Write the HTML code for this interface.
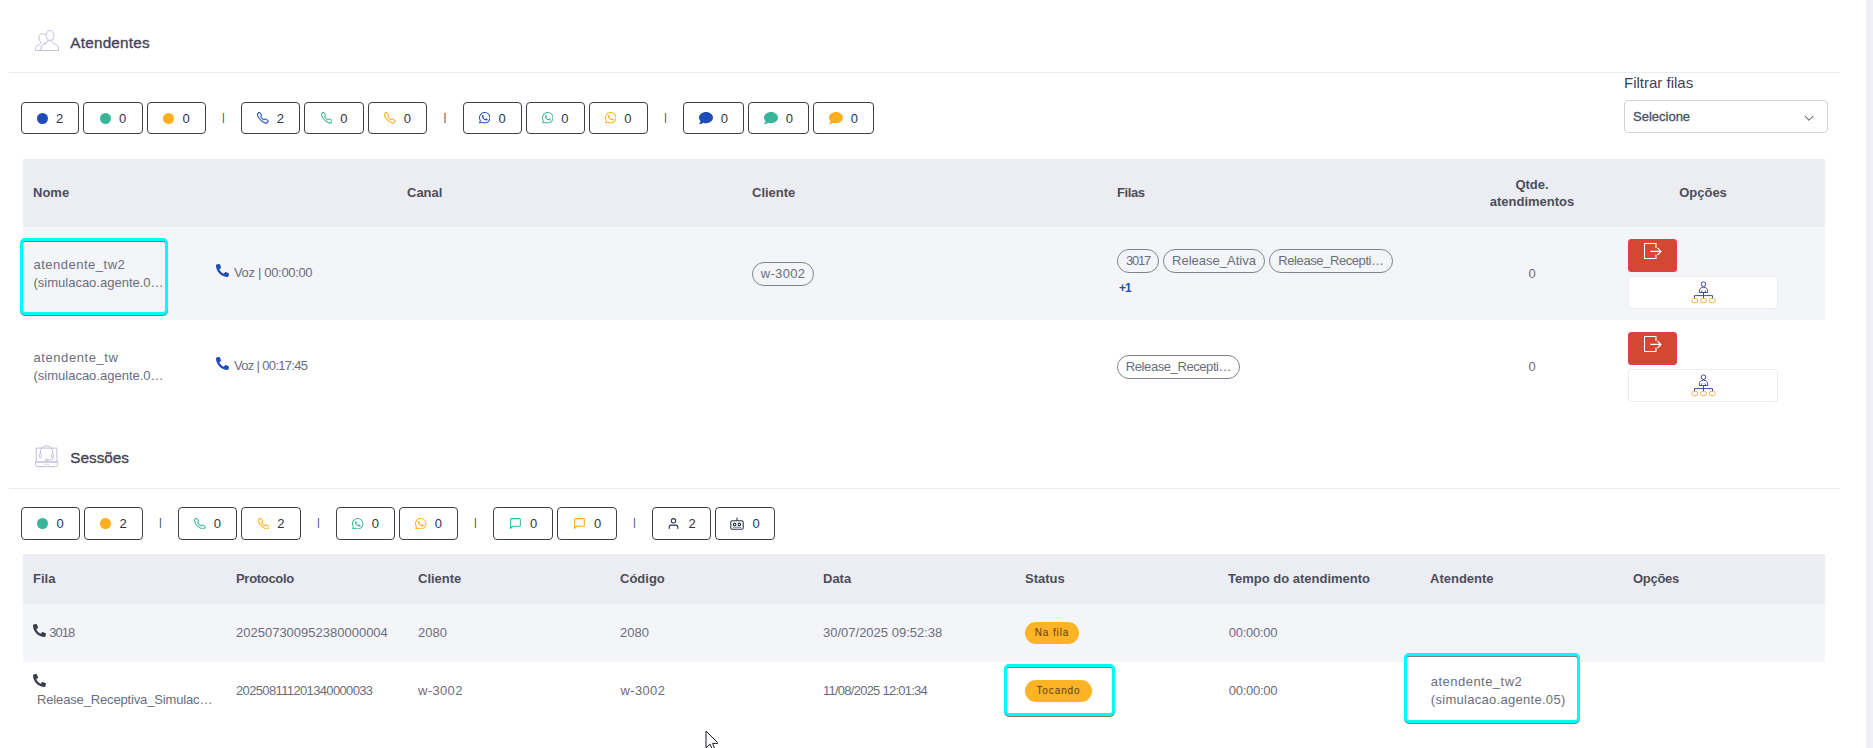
<!DOCTYPE html>
<html lang="pt-BR">
<head>
<meta charset="utf-8">
<title>Monitoramento</title>
<style>
*{box-sizing:border-box;margin:0;padding:0}
html,body{width:1873px;height:748px;overflow:hidden;background:#fff}
body{position:relative;font-family:"Liberation Sans",sans-serif;font-size:13px;color:#6b6d7c}
.abs{position:absolute}
.scroll{position:absolute;left:1866px;top:0;width:7px;height:748px;background:#efeff8}
.sec-title{position:absolute;left:70.3px;font-size:15.3px;letter-spacing:.22px;font-weight:400;color:#464457;line-height:20px;white-space:nowrap;-webkit-text-stroke:.35px #464457}
.sec-ico{position:absolute;left:34px;width:24px;height:24px}
.hr{position:absolute;left:9px;width:1831px;height:1px;background:#e9ebf2}
.filters{position:absolute;left:21px;height:32px;display:flex;align-items:stretch}
.fb{font-family:inherit;padding:0;cursor:pointer;border:1px solid #3c4149;border-radius:4px;background:#fff;margin-right:4px;display:flex;align-items:center;justify-content:center;font-size:13px;color:#2f3346;white-space:nowrap}
.fb i{display:inline-block;margin-right:8px;line-height:0}
.fb .dot{width:11px;height:11px;border-radius:50%}
.sep{width:27px;margin-right:4px;text-align:center;line-height:31px;font-size:11px;color:#3f4254}
.blue{color:#1e4db7}.green{color:#39b69a}.orange{color:#ffae1f}
.bg-blue{background:#1e4db7}.bg-green{background:#39b69a}.bg-orange{background:#ffae1f}
.lbl{position:absolute;left:1624px;top:73px;font-size:15px;line-height:20px;color:#3f4254;white-space:nowrap}
.select{position:absolute;left:1624px;top:100px;width:204px;height:33px;border:1px solid #ced4da;border-radius:4px;background:#fff;font-size:13px;line-height:31px;padding-left:8px;color:#4b4d5c;font-weight:400;-webkit-text-stroke:.3px #4b4d5c}
.select svg{position:absolute;right:13px;top:12.500px}
.tbl{position:absolute;left:23px;width:1802px}
.row{position:absolute;left:0;width:1802px}
.th{position:absolute;font-weight:700;font-size:13px;color:#4b4d5b;line-height:17px;white-space:nowrap}
.td{position:absolute;font-size:13px;color:#6b6d7c;line-height:18px;white-space:nowrap}
.pill{position:absolute;height:24px;border:1px solid #80838f;border-radius:12px;font-size:13px;line-height:22px;text-align:center;color:#6b6d7c;white-space:nowrap}
.badge{position:absolute;height:22px;border-radius:11px;background:#fdb326;color:#5a3d10;font-size:10px;line-height:22px;text-align:center;letter-spacing:.9px;white-space:nowrap}
.hl{position:absolute;border:3.4px solid #00fcfc;border-radius:5px;filter:drop-shadow(0 1px .6px rgba(40,40,40,.6))}
.btn-red{position:absolute;left:1605px;width:49px;height:33px;border-radius:3px;background:#d44733;border:1px solid #e8365d}
.btn-wh{position:absolute;left:1605px;width:150px;height:33px;border-radius:3px;background:#fff;border:1px solid #eaecf2}
</style>
</head>
<body>
<div class="scroll"></div>

<!-- ATENDENTES -->
<svg class="sec-ico" style="left:34.500px;top:29.500px;width:25px;height:22px" viewBox="0 0 25 22" fill="none" stroke="#bdb6db" stroke-width=".9"><ellipse cx="15" cy="5.500" rx="4" ry="5"/><path d="M12.800 9.800c.2 1.500-.2 2.600-1.200 3.200l-3.600 1.800c-1.300.7-2 1.800-2 3.200v2.500h17.500v-2.500c0-1.400-.7-2.500-2-3.200l-3.600-1.800c-1-.6-1.400-1.700-1.200-3.200"/><path d="M10.700 5.200C9.800 4.200 8.600 3.700 7.300 3.700 5.200 3.700 3.900 5.500 3.900 8c0 1.700.7 3.200 1.800 4 .1 1.200-.2 2-1.100 2.500l-2.500 1.300C1 16.400.500 17.300.500 18.500v2H6M9.300 12c0 .8.200 1.500.7 2"/></svg>
<h4 class="sec-title" style="top:33px">Atendentes</h4>
<div class="hr" style="top:72px"></div>

<div class="filters" style="top:102px">
  <button type="button" class="fb" style="width:58px"><i class="dot bg-blue"></i>2</button>
  <button type="button" class="fb" style="width:60px"><i class="dot bg-green"></i>0</button>
  <button type="button" class="fb" style="width:59px"><i class="dot bg-orange"></i>0</button>
  <div class="sep">|</div>
  <button type="button" class="fb" style="width:59px"><i><svg width="11.5" height="11.5" viewBox="0 0 16 16" fill="#1e4db7" stroke="#1e4db7" stroke-width=".45"><use href="#i-tel"/></svg></i>2</button>
  <button type="button" class="fb" style="width:60px"><i><svg width="11.5" height="11.5" viewBox="0 0 16 16" fill="#39b69a" stroke="#39b69a" stroke-width=".45"><use href="#i-tel"/></svg></i>0</button>
  <button type="button" class="fb" style="width:59px"><i><svg width="11.5" height="11.5" viewBox="0 0 16 16" fill="#ffae1f" stroke="#ffae1f" stroke-width=".45"><use href="#i-tel"/></svg></i>0</button>
  <div class="sep" style="width:28px">|</div>
  <button type="button" class="fb" style="width:58.7px"><i><svg width="11.5" height="11.5" viewBox="0 0 16 16" fill="#1e4db7"><use href="#i-wa"/></svg></i>0</button>
  <button type="button" class="fb" style="width:59px"><i><svg width="11.5" height="11.5" viewBox="0 0 16 16" fill="#39b69a"><use href="#i-wa"/></svg></i>0</button>
  <button type="button" class="fb" style="width:59px"><i><svg width="11.5" height="11.5" viewBox="0 0 16 16" fill="#ffae1f"><use href="#i-wa"/></svg></i>0</button>
  <div class="sep" style="width:27.3px">|</div>
  <button type="button" class="fb" style="width:61px"><i><svg width="14" height="14" viewBox="0 0 512 512" fill="#1e4db7"><use href="#i-chatf"/></svg></i>0</button>
  <button type="button" class="fb" style="width:61px"><i><svg width="14" height="14" viewBox="0 0 512 512" fill="#39b69a"><use href="#i-chatf"/></svg></i>0</button>
  <button type="button" class="fb" style="width:61px"><i><svg width="14" height="14" viewBox="0 0 512 512" fill="#ffae1f"><use href="#i-chatf"/></svg></i>0</button>
</div>

<label class="lbl">Filtrar filas</label>
<div class="select">Selecione<svg width="10" height="8" viewBox="0 0 10 8" fill="none" stroke="#343a40" stroke-width="1"><path d="M.7 2L5 6.300 9.300 2"/></svg></div>

<!-- table 1 -->
<div class="tbl" role="table" style="top:159px;height:254px">
  <div class="row" role="row" style="top:0;height:68px;background:#ecedf3">
    <div class="th" role="columnheader" style="left:10px;top:25px">Nome</div>
    <div class="th" role="columnheader" style="left:384px;top:25px">Canal</div>
    <div class="th" role="columnheader" style="left:729px;top:25px">Cliente</div>
    <div class="th" role="columnheader" style="left:1094px;top:25px;letter-spacing:-.4px">Filas</div>
    <div class="th" role="columnheader" style="left:1429px;top:17px;width:160px;text-align:center;white-space:normal">Qtde.<br>atendimentos</div>
    <div class="th" role="columnheader" style="left:1620px;top:25px;width:120px;text-align:center">Opções</div>
  </div>
  <div class="row" role="row" style="top:68px;height:93px;background:#f4f5f9">
    <div class="td" style="left:10.5px;top:29px"><span style="letter-spacing:.5px">atendente_tw2</span><br>(simulacao.agente.0…</div>
    <svg class="abs" style="left:193px;top:37px" width="13" height="13" viewBox="0 0 512 512" fill="#1e4db7"><use href="#i-phone"/></svg>
    <div class="td" style="left:211px;top:37px;letter-spacing:-.33px">Voz | 00:00:00</div>
    <div class="pill" style="left:729px;top:35px;width:62px;letter-spacing:.3px">w-3002</div>
    <div class="pill" style="left:1094px;top:22px;width:42px;letter-spacing:-1.2px">3017</div>
    <div class="pill" style="left:1140px;top:22px;width:102px">Release_Ativa</div>
    <div class="pill" style="left:1246px;top:22px;width:124px;letter-spacing:-.42px">Release_Recepti…</div>
    <div class="td" style="left:1096px;top:52px;font-size:12px;font-weight:700;color:#1e4db7;letter-spacing:-1px">+1</div>
    <div class="td" style="left:1429px;top:38px;width:160px;text-align:center">0</div>
    <div class="btn-red" style="top:12px"><svg class="abs" style="left:15px;top:-1px" width="20" height="24" viewBox="0 0 20 24" fill="none" stroke="#fff" stroke-width="1.1"><use href="#i-exit"/></svg></div>
    <div class="btn-wh" style="top:49px"><svg class="abs" style="left:62px;top:2.5px" width="26" height="24" viewBox="0 0 26 24" fill="none" stroke-width="1"><use href="#i-org"/></svg></div>
  </div>
  <div class="row" role="row" style="top:161px;height:93px;background:#fff">
    <div class="td" style="left:10.5px;top:29px"><span style="letter-spacing:.57px">atendente_tw</span><br>(simulacao.agente.0…</div>
    <svg class="abs" style="left:193px;top:37px" width="13" height="13" viewBox="0 0 512 512" fill="#1e4db7"><use href="#i-phone"/></svg>
    <div class="td" style="left:211px;top:37px;letter-spacing:-.68px">Voz | 00:17:45</div>
    <div class="pill" style="left:1094px;top:35px;width:123px;letter-spacing:-.42px">Release_Recepti…</div>
    <div class="td" style="left:1429px;top:38px;width:160px;text-align:center">0</div>
    <div class="btn-red" style="top:12px"><svg class="abs" style="left:15px;top:-1px" width="20" height="24" viewBox="0 0 20 24" fill="none" stroke="#fff" stroke-width="1.1"><use href="#i-exit"/></svg></div>
    <div class="btn-wh" style="top:49px"><svg class="abs" style="left:62px;top:2.5px" width="26" height="24" viewBox="0 0 26 24" fill="none" stroke-width="1"><use href="#i-org"/></svg></div>
  </div>
</div>
<div class="hl" style="left:19.5px;top:238px;width:148.5px;height:77.3px"></div>

<!-- SESSOES -->
<svg class="sec-ico" style="left:35px;top:445px;width:24px;height:23px" viewBox="0 0 24 23" fill="none" stroke="#bdb6db" stroke-width=".9"><rect x="1.200" y="3.100" width="20.700" height="13.900"/><path d="M.4 17h22.400v2.200a2.500 2.500 0 0 1-2.500 2.500H2.900a2.500 2.500 0 0 1-2.500-2.500z"/><path d="M5.400 8.500V6.900a6.100 6.100 0 0 1 12.200 0v1.600"/><rect x="4.400" y="8.500" width="2" height="4.300" rx="1"/><rect x="16.600" y="8.500" width="2" height="4.300" rx="1"/><path d="M17.600 12.800v1.100a1 1 0 0 1-1 1H13"/><ellipse cx="11.600" cy="14.900" rx="1.500" ry="1"/><path d="M9.400 19.400h.9M11.100 19.400h.9M12.800 19.400h.9"/></svg>
<h4 class="sec-title" style="top:448px;letter-spacing:0">Sessões</h4>
<div class="hr" style="top:488px"></div>

<div class="filters" style="top:507px;height:33px">
  <button type="button" class="fb" style="width:59px"><i class="dot bg-green"></i>0</button>
  <button type="button" class="fb" style="width:59px"><i class="dot bg-orange"></i>2</button>
  <div class="sep">|</div>
  <button type="button" class="fb" style="width:59px"><i><svg width="11.5" height="11.5" viewBox="0 0 16 16" fill="#39b69a" stroke="#39b69a" stroke-width=".45"><use href="#i-tel"/></svg></i>0</button>
  <button type="button" class="fb" style="width:60px"><i><svg width="11.5" height="11.5" viewBox="0 0 16 16" fill="#ffae1f" stroke="#ffae1f" stroke-width=".45"><use href="#i-tel"/></svg></i>2</button>
  <div class="sep">|</div>
  <button type="button" class="fb" style="width:59px"><i><svg width="11.5" height="11.5" viewBox="0 0 16 16" fill="#39b69a"><use href="#i-wa"/></svg></i>0</button>
  <button type="button" class="fb" style="width:59px"><i><svg width="11.5" height="11.5" viewBox="0 0 16 16" fill="#ffae1f"><use href="#i-wa"/></svg></i>0</button>
  <div class="sep">|</div>
  <button type="button" class="fb" style="width:60px"><i><svg width="13" height="13" viewBox="0 0 24 24" fill="none" stroke="#39b69a" stroke-width="2" stroke-linecap="round" stroke-linejoin="round"><use href="#i-chat"/></svg></i>0</button>
  <button type="button" class="fb" style="width:60px"><i><svg width="13" height="13" viewBox="0 0 24 24" fill="none" stroke="#ffae1f" stroke-width="2" stroke-linecap="round" stroke-linejoin="round"><use href="#i-chat"/></svg></i>0</button>
  <div class="sep">|</div>
  <button type="button" class="fb" style="width:59px"><i><svg width="13" height="13" viewBox="0 0 24 24" fill="none" stroke="#33374a" stroke-width="2" stroke-linecap="round" stroke-linejoin="round"><use href="#i-person"/></svg></i>2</button>
  <button type="button" class="fb" style="width:60px"><i><svg width="14" height="13" viewBox="0 0 14 13" fill="none" stroke="#33374a" stroke-width="1.1"><use href="#i-robot"/></svg></i>0</button>
</div>

<!-- table 2 -->
<div class="tbl" role="table" style="top:554px;height:166px">
  <div class="row" role="row" style="top:0;height:50px;background:#ecedf3">
    <div class="th" role="columnheader" style="left:10px;top:16px">Fila</div>
    <div class="th" role="columnheader" style="left:213px;top:16px;letter-spacing:-.3px">Protocolo</div>
    <div class="th" role="columnheader" style="left:395px;top:16px">Cliente</div>
    <div class="th" role="columnheader" style="left:597px;top:16px">Código</div>
    <div class="th" role="columnheader" style="left:800px;top:16px">Data</div>
    <div class="th" role="columnheader" style="left:1002px;top:16px">Status</div>
    <div class="th" role="columnheader" style="left:1205px;top:16px">Tempo do atendimento</div>
    <div class="th" role="columnheader" style="left:1407px;top:16px">Atendente</div>
    <div class="th" role="columnheader" style="left:1610px;top:16px;letter-spacing:-.3px">Opções</div>
  </div>
  <div class="row" role="row" style="top:50px;height:58px;background:#f4f5f9">
    <svg class="abs" style="left:10px;top:20px" width="13" height="13" viewBox="0 0 512 512" fill="#3a3d4d"><use href="#i-phone"/></svg>
    <div class="td" style="left:26.3px;top:20px;letter-spacing:-1px">3018</div>
    <div class="td" style="left:213px;top:20px">202507300952380000004</div>
    <div class="td" style="left:395px;top:20px">2080</div>
    <div class="td" style="left:597px;top:20px">2080</div>
    <div class="td" style="left:800px;top:20px">30/07/2025 09:52:38</div>
    <div class="badge" style="left:1002px;top:18px;width:54px">Na fila</div>
    <div class="td" style="left:1205.8px;top:20px;letter-spacing:-.28px">00:00:00</div>
  </div>
  <div class="row" role="row" style="top:108px;height:58px;background:#fff">
    <svg class="abs" style="left:10px;top:12px" width="13" height="13" viewBox="0 0 512 512" fill="#3a3d4d"><use href="#i-phone"/></svg>
    <div class="td" style="left:14px;top:29px;letter-spacing:-.15px">Release_Receptiva_Simulac…</div>
    <div class="td" style="left:213px;top:20px;letter-spacing:-.64px">202508111201340000033</div>
    <div class="td" style="left:395px;top:20px;letter-spacing:.35px">w-3002</div>
    <div class="td" style="left:597.5px;top:20px;letter-spacing:.35px">w-3002</div>
    <div class="td" style="left:800px;top:20px;letter-spacing:-.75px">11/08/2025 12:01:34</div>
    <div class="badge" style="left:1002px;top:18px;width:67px">Tocando</div>
    <div class="td" style="left:1205.8px;top:20px;letter-spacing:-.28px">00:00:00</div>
  </div>
</div>
<div class="hl" style="left:1004.4px;top:663.5px;width:110.5px;height:52.6px"></div>
<div class="abs" style="left:1406px;top:655px;width:172px;height:66px;background:#fff"></div>
<div class="hl" style="left:1404.4px;top:653px;width:175.8px;height:69.8px"></div>
<div class="td" style="left:1430.8px;top:673px;letter-spacing:.29px"><span style="letter-spacing:.47px">atendente_tw2</span><br>(simulacao.agente.05)</div>

<!-- cursor -->
<svg class="abs" style="left:703.5px;top:729px" width="16" height="24" viewBox="-2 -2 16 24"><path d="M0 0V16.800L4.100 13.200 6.600 19.200 8.900 18.200 6.600 12.400H11.600V11.600Z" fill="#fff" stroke="#1a1a26" stroke-width="1" stroke-linejoin="miter"/></svg>

<!-- icon defs -->
<svg width="0" height="0" style="position:absolute">
<defs>
<path id="i-phone" d="M493.400 24.600l-104-24c-11.300-2.600-22.900 3.300-27.500 13.900l-48 112c-4.200 9.800-1.400 21.300 6.900 28l60.600 49.600c-36 76.700-98.900 140.500-177.200 177.200l-49.600-60.600c-6.800-8.300-18.200-11.100-28-6.900l-112 48C3.900 366.500-2 378.100.6 389.400l24 104C27.100 504.200 36.700 512 48 512c256.100 0 464-207.500 464-464 0-11.200-7.700-20.900-18.600-23.400z" transform="matrix(-1 0 0 1 512 0)"/>
<path id="i-tel" d="M3.654 1.328a.678.678 0 0 0-1.015-.063L1.605 2.300c-.483.484-.661 1.169-.45 1.770a17.568 17.568 0 0 0 4.168 6.608 17.569 17.569 0 0 0 6.608 4.168c.601.211 1.286.033 1.770-.45l1.034-1.034a.678.678 0 0 0-.063-1.015l-2.307-1.794a.678.678 0 0 0-.58-.122l-2.190.547a1.745 1.745 0 0 1-1.657-.459L5.482 8.062a1.745 1.745 0 0 1-.46-1.657l.548-2.190a.678.678 0 0 0-.122-.58L3.654 1.328zM1.884.511a1.745 1.745 0 0 1 2.612.163L6.290 2.980c.329.423.445.974.315 1.494l-.547 2.190a.678.678 0 0 0 .178.643l2.457 2.457a.678.678 0 0 0 .644.178l2.189-.547a1.745 1.745 0 0 1 1.494.315l2.306 1.794c.829.645.905 1.870.163 2.611l-1.034 1.034c-.74.740-1.846 1.065-2.877.702a18.634 18.634 0 0 1-7.010-4.420 18.634 18.634 0 0 1-4.420-7.009c-.362-1.030-.037-2.137.703-2.877L1.885.511z"/>
<path id="i-wa" d="M13.601 2.326A7.854 7.854 0 0 0 7.994 0C3.627 0 .068 3.558.064 7.926c0 1.399.366 2.760 1.057 3.965L0 16l4.204-1.102a7.933 7.933 0 0 0 3.790.965h.004c4.368 0 7.926-3.558 7.930-7.930A7.898 7.898 0 0 0 13.600 2.326zM7.994 14.521a6.573 6.573 0 0 1-3.356-.920l-.240-.144-2.494.654.666-2.433-.156-.251a6.560 6.560 0 0 1-1.007-3.505c0-3.626 2.957-6.584 6.591-6.584a6.560 6.560 0 0 1 4.660 1.931 6.557 6.557 0 0 1 1.928 4.660c-.004 3.639-2.961 6.592-6.592 6.592zm3.615-4.934c-.197-.099-1.170-.578-1.353-.646-.182-.065-.315-.099-.445.099-.133.197-.513.646-.627.775-.114.133-.232.148-.430.050-.197-.100-.836-.308-1.592-.985-.590-.525-.985-1.175-1.103-1.372-.114-.198-.011-.304.088-.403.087-.088.197-.232.296-.346.100-.114.133-.198.198-.330.065-.134.034-.248-.015-.347-.050-.099-.445-1.076-.612-1.470-.160-.389-.323-.335-.445-.340-.114-.007-.247-.007-.380-.007a.729.729 0 0 0-.529.247c-.182.198-.691.677-.691 1.654 0 .977.710 1.916.810 2.049.098.133 1.394 2.132 3.383 2.992.470.205.840.326 1.129.418.475.152.904.129 1.246.080.380-.058 1.171-.480 1.338-.943.164-.464.164-.860.114-.943-.049-.084-.182-.133-.380-.232z"/>
<path id="i-chatf" d="M256 32C114.600 32 0 125.100 0 240c0 49.600 21.400 95 57 130.700C44.500 421.100 2.700 466 2.200 466.500c-2.200 2.300-2.800 5.700-1.500 8.700S4.800 480 8 480c66.300 0 116-31.800 140.600-51.400 32.700 12.300 69 19.400 107.400 19.400 141.400 0 256-93.100 256-208S397.400 32 256 32z"/>
<path id="i-chat" d="M21 15a2 2 0 0 1-2 2H7l-4 4V5a2 2 0 0 1 2-2h14a2 2 0 0 1 2 2z"/>
<g id="i-person"><path d="M20 21v-2a4 4 0 0 0-4-4H8a4 4 0 0 0-4 4v2"/><circle cx="12" cy="7" r="4"/></g>
<g id="i-robot"><path d="M7 1.200V3.800"/><circle cx="7" cy="1" r=".6" fill="#33374a" stroke="none"/><rect x=".8" y="3.800" width="12.400" height="8.400" rx="1.400"/><circle cx="4.600" cy="7.400" r="1.300"/><circle cx="9.400" cy="7.400" r="1.300"/><path d="M3.300 10.300h7.400" stroke-dasharray="1.300 .7"/></g>
<g id="i-exit"><path d="M12 9V4.500H.500v15H12V15.500"/><path d="M6.300 12.400H17M13.500 9L17 12.400 13.500 16"/></g>
<g id="i-org"><circle cx="12.500" cy="4.200" r="2.300" stroke="#3f4a9b"/><path d="M8.300 12.500v-1.600c0-2.200 1.900-3.700 4.200-3.700s4.200 1.500 4.200 3.700v1.600z" stroke="#3f4a9b"/><path d="M10.300 12.300l.700-2M14.700 12.300l-.700-2" stroke="#3f4a9b" stroke-width=".8"/><path d="M12.500 12.500v6M3.500 18.300v-2.700h18v2.700" stroke="#3f4a9b"/><rect x="1" y="18.400" width="5.600" height="4.300" rx="1.500" stroke="#f3b24a"/><rect x="9.700" y="18.400" width="5.600" height="4.300" rx="1.800" stroke="#f3b24a"/><rect x="18.400" y="18.400" width="5.600" height="4.300" rx="1.500" stroke="#f3b24a"/></g>
</defs>
</svg>
</body>
</html>
